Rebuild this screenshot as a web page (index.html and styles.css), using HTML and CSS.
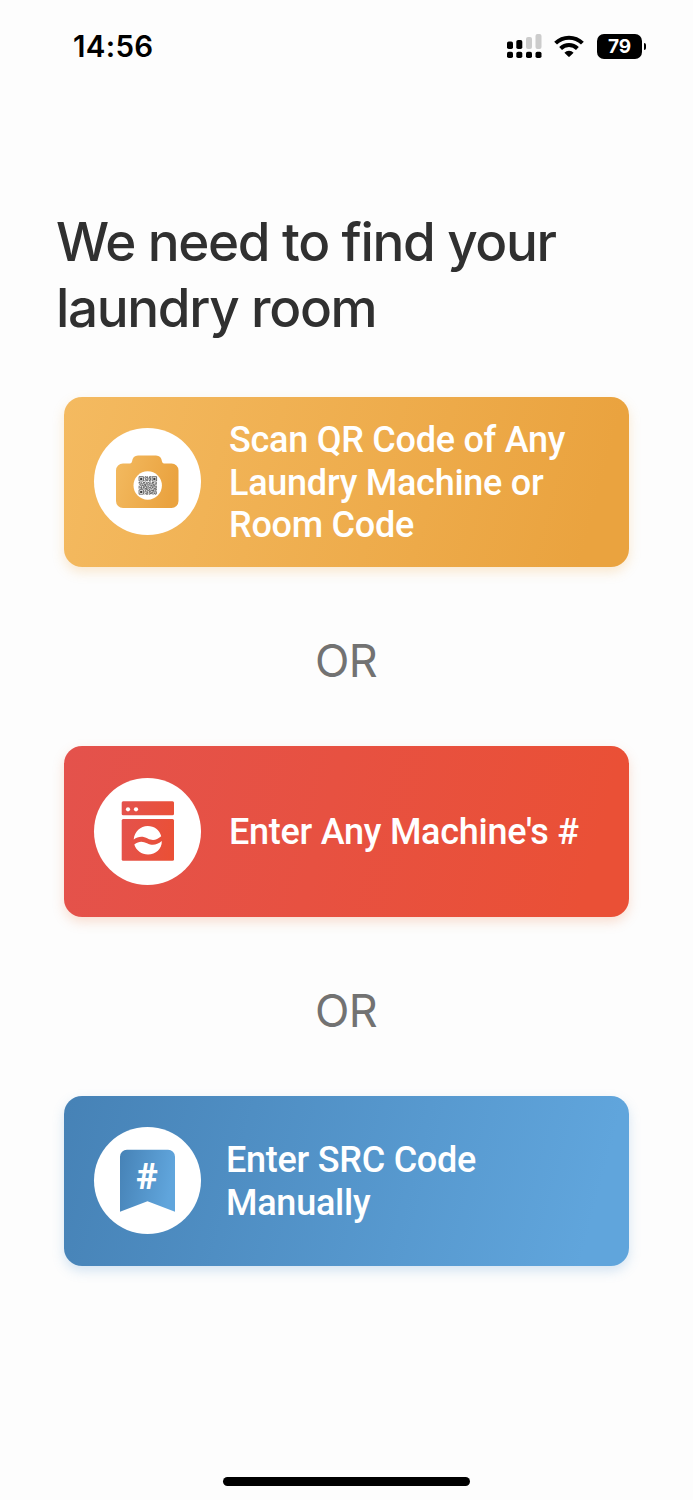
FILE: index.html
```html
<!DOCTYPE html>
<html lang="en">
<head>
    <meta charset="UTF-8">
    <meta name="viewport" content="width=device-width, initial-scale=1.0">
    <title>Find your laundry room</title>
    <link rel="stylesheet" href="styles.css">
</head>
<body>
    <header class="status-bar">
        <span class="time">14:56</span>
        <div class="status-icons">
            <svg class="signal" width="35" height="26" viewBox="0 0 35 26">
                <g fill="#ccc">
                    <rect x="19" y="4" width="6" height="12" rx="2"/>
                    <rect x="28.500" y="1" width="6" height="15" rx="2"/>
                </g>
                <rect x="0" y="8.500" width="6" height="7.500" rx="1.800"/>
                <rect x="9.300" y="7" width="6" height="9" rx="1.800"/>
                <rect x="0" y="18.700" width="6" height="6.300" rx="1.800"/>
                <rect x="9.300" y="18.700" width="6" height="6.300" rx="1.800"/>
                <rect x="19" y="18.700" width="6" height="6.300" rx="1.800"/>
                <rect x="28.500" y="18.700" width="6" height="6.300" rx="1.800"/>
            </svg>
            <svg class="wifi" width="30" height="23" viewBox="0 0 30 23">
                <g fill="none" stroke="#000" stroke-width="4">
                    <path d="M1.600 8.200a19 19 0 0 1 26.800 0"/>
                    <path d="M6.600 13.500a12 12 0 0 1 16.800 0"/>
                </g>
                <path d="M10.400 17.700a6.600 6.600 0 0 1 9.200 0L15.700 21.600q-.7.7-1.400 0z"/>
            </svg>
            <div class="battery">79</div>
            <div class="battery-cap"></div>
        </div>
    </header>

    <main>
        <h1>We need to find your laundry room</h1>

        <button class="option scan">
            <span class="option-icon">
                <svg width="107" height="107" viewBox="0 0 107 107">
                    <defs>
                        <linearGradient id="orange" x1="0" y1="0" x2="1" y2=".25">
                            <stop offset="0" stop-color="#f3ba60"/>
                            <stop offset="1" stop-color="#eaa340"/>
                        </linearGradient>
                    </defs>
                    <path fill="url(#orange)" d="M29 35.500h7q1.600 0 2-2c.5-4 2.500-6 6-6h18c3.500 0 5.500 2 6 6q.4 2 2 2h7.500a7 7 0 0 1 7 7V73a7 7 0 0 1-7 7H29a7 7 0 0 1-7-7V42.500a7 7 0 0 1 7-7z"/>
                    <circle cx="53.700" cy="57.500" r="14.200" fill="#fff"/>
                    <!-- qr code, 25 x 25 modules -->
                    <g transform="translate(44.700 48.300) scale(.73)" fill="none" stroke="#3c3c3c">
                        <path d="M.5.5h6v6h-6zM18.500.5h6v6h-6zM.5 18.500h6v6h-6z"/>
                        <path stroke-width="3" d="M2 3.500h3M20 3.500h3M2 21.500h3"/>
                        <path stroke-dasharray="2 1 1 2 3 1 1 1" d="M8.500.5h9M8 2.500h9M9 4.500h8M8 6.500h9M0 8.500h25M1 11.500h24M0 14.500h25M2 17.500h23M8 20.500h16M9 23.500h16"/>
                        <path stroke-dasharray="1 1 3 1 2 2 1 1" d="M8 1.500h9M9 3.500h8M8 5.500h9M0 9.500h25M2 12.500h22M0 15.500h25M8 18.500h17M8 21.500h17M8 24.500h16"/>
                        <path stroke-dasharray="1 2 2 1 1 1 4 1" d="M1 10.500h24M0 13.500h25M0 16.500h24M9 19.500h16M8 22.500h17"/>
                    </g>
                </svg>
            </span>
            <span class="option-label">Scan QR Code of Any<br>Laundry Machine or<br>Room Code</span>
        </button>

        <p class="or">OR</p>

        <button class="option machine">
            <span class="option-icon">
                <svg width="107" height="107" viewBox="0 0 107 107">
                    <defs>
                        <linearGradient id="red" gradientUnits="userSpaceOnUse" x1="27" y1="50" x2="80" y2="60">
                            <stop offset="0" stop-color="#e4524c"/>
                            <stop offset="1" stop-color="#ea5036"/>
                        </linearGradient>
                    </defs>
                    <rect x="27.700" y="23.300" width="52.300" height="14" rx="1.500" fill="url(#red)"/>
                    <rect x="27.700" y="41" width="52.300" height="41.700" rx="1.500" fill="url(#red)"/>
                    <g fill="#fff">
                        <circle cx="34" cy="31.300" r="2.100"/>
                        <circle cx="42" cy="31.300" r="2.100"/>
                        <path d="M39.700 61.500C40.500 53.500 46.500 48 53.700 48c6.500 0 12 4 13.500 10.300-4.500 3.800-8.500 4.800-13.500 2.200-5-2.700-9.500-2.500-14 1z"/>
                        <path d="M40.300 66.500c4.300-3.300 8.300-3.300 12.700-1.200 5.700 2.700 9.700 1.700 14.800-2.300.2 8.200-6 13.400-13.800 13.400-6.500 0-11.700-3.700-13.700-9.900z"/>
                    </g>
                </svg>
            </span>
            <span class="option-label">Enter Any Machine's #</span>
        </button>

        <p class="or">OR</p>

        <button class="option code">
            <span class="option-icon">
                <svg width="107" height="107" viewBox="0 0 107 107">
                    <defs>
                        <linearGradient id="blue" x1="0" y1="0" x2="1" y2=".2">
                            <stop offset="0" stop-color="#4682b6"/>
                            <stop offset="1" stop-color="#60a5dc"/>
                        </linearGradient>
                    </defs>
                    <path fill="url(#blue)" d="M26 84.700V29.800a7 7 0 0 1 7-7h41a7 7 0 0 1 7 7v54.900L53.500 74.300z"/>
                    <text class="hash" x="53" y="62.300" text-anchor="middle">#</text>
                </svg>
            </span>
            <span class="option-label">Enter SRC Code<br>Manually</span>
        </button>
    </main>

    <div class="home-indicator"></div>
</body>
</html>
```
FILE: styles.css
```css
* {
    box-sizing: border-box;
}
body {
    margin: 0;
    height: 1500px;
    display: flex;
    flex-direction: column;
    background-color: #fdfdfd;
    font-family: Inter, sans-serif;
    overflow: hidden;
}
.status-bar {
    height: 92px;
    padding: 0 47px 0 73px;
    display: flex;
    align-items: center;
    justify-content: space-between;
    color: #000;
}
.time {
    font-size: 29.5px;
    font-weight: 600;
    letter-spacing: 0.3px;
}
.status-icons {
    display: flex;
    align-items: center;
}
.wifi {
    margin-left: 12px;
}
.battery {
    width: 45px;
    height: 25px;
    margin-left: 13px;
    border-radius: 7px;
    background-color: #000;
    color: #fff;
    font-size: 19px;
    font-weight: 700;
    line-height: 25px;
    text-align: center;
}
.battery-cap {
    width: 2px;
    height: 7px;
    margin-left: 2px;
    border-radius: 0 2px 2px 0;
    background-color: #000;
}
main {
    padding: 116.6px 64px 0;
}
h1 {
    width: 540px;
    margin: 0 0 56px -8px;
    color: #303030;
    font-size: 53px;
    font-weight: 500;
    line-height: 66px;
    letter-spacing: -1.35px;
}
.option {
    width: 100%;
    height: 170.5px;
    padding: 0 0 0 30px;
    display: flex;
    align-items: center;
    border: 0;
    border-radius: 18px;
    color: #fff;
    text-align: left;
    cursor: pointer;
}
.scan {
    background: linear-gradient(105deg, #f4ba60, #eaa33f 92%);
    box-shadow: 0 5px 12px rgba(240, 170, 70, 0.25);
}
.machine {
    background: linear-gradient(105deg, #e4524c, #ea5036 92%);
    box-shadow: 0 5px 12px rgba(235, 130, 80, 0.25);
}
.code {
    background: linear-gradient(105deg, #4682b6, #60a5dc 92%);
    box-shadow: 0 5px 12px rgba(90, 155, 210, 0.25);
}
.option-icon {
    width: 107px;
    height: 107px;
    flex: none;
    border-radius: 50%;
    background-color: #fff;
}
.option-icon svg {
    display: block;
}
.option-label {
    margin-left: 28px;
    padding-top: 2px;
    font-family: Roboto, sans-serif;
    font-size: 36px;
    font-weight: 500;
    line-height: 42.6px;
    letter-spacing: -0.26px;
    white-space: nowrap;
}
.code .option-label {
    margin-left: 25px;
}
.hash {
    fill: #fff;
    font-family: Roboto, sans-serif;
    font-size: 37px;
    font-weight: 800;
}
.or {
    height: 179px;
    margin: 0;
    padding: 4px 1px 0 0;
    color: #727272;
    font-size: 45px;
    line-height: 180px;
    letter-spacing: -0.8px;
    text-align: center;
}
.home-indicator {
    width: 247px;
    height: 9px;
    margin: auto auto 14px;
    border-radius: 5px;
    background-color: #000;
}
```
